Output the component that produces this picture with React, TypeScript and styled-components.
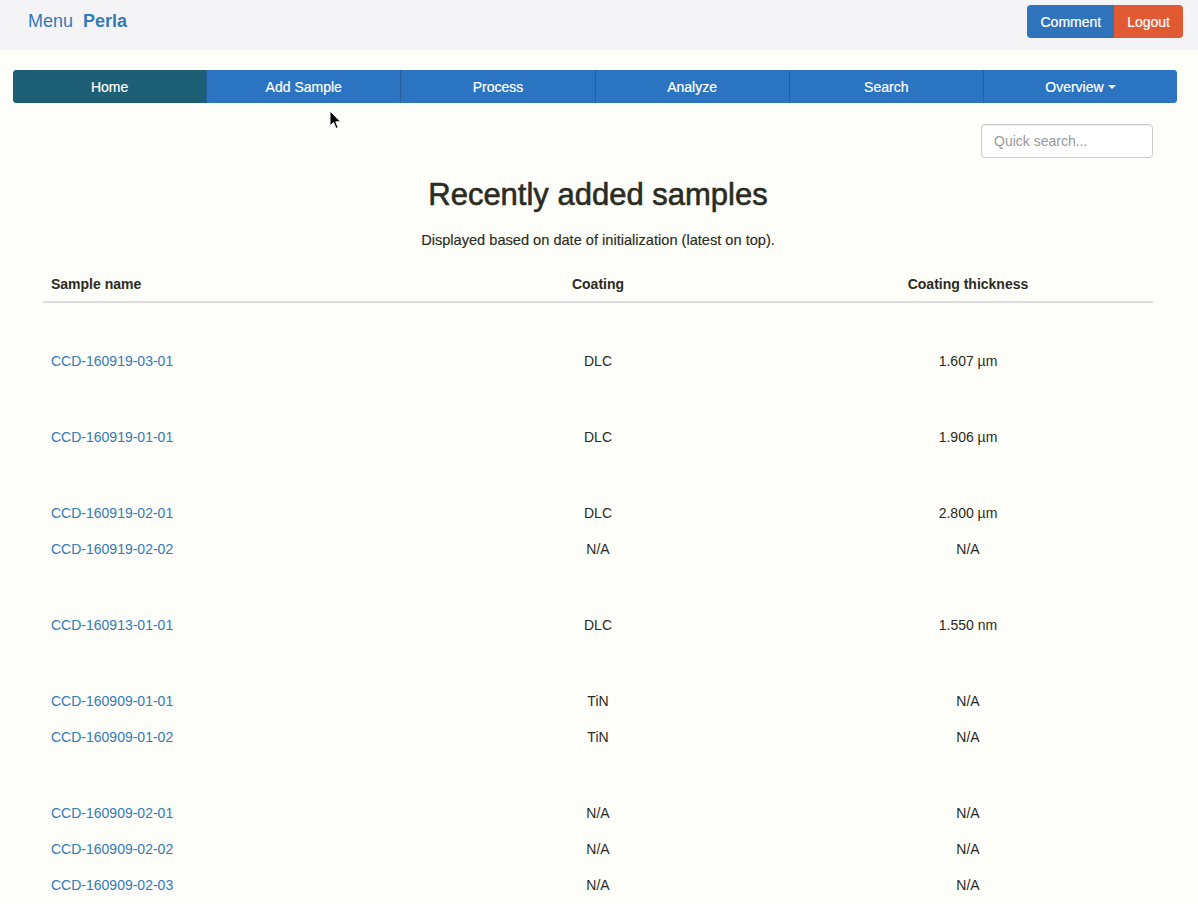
import styled, { createGlobalStyle } from "styled-components"

const GlobalStyle = createGlobalStyle`
  html, body {
    margin: 0;
    padding: 0;
    background: #fdfdf9;
    font-family: "Liberation Sans", Arial, sans-serif;
    font-size: 14px;
    color: #333;
  }
`

type Sample = { name: string; coating: string; thickness: string }

const groups: Sample[][] = [
  [{ name: "CCD-160919-03-01", coating: "DLC", thickness: "1.607 µm" }],
  [{ name: "CCD-160919-01-01", coating: "DLC", thickness: "1.906 µm" }],
  [
    { name: "CCD-160919-02-01", coating: "DLC", thickness: "2.800 µm" },
    { name: "CCD-160919-02-02", coating: "N/A", thickness: "N/A" },
  ],
  [{ name: "CCD-160913-01-01", coating: "DLC", thickness: "1.550 nm" }],
  [
    { name: "CCD-160909-01-01", coating: "TiN", thickness: "N/A" },
    { name: "CCD-160909-01-02", coating: "TiN", thickness: "N/A" },
  ],
  [
    { name: "CCD-160909-02-01", coating: "N/A", thickness: "N/A" },
    { name: "CCD-160909-02-02", coating: "N/A", thickness: "N/A" },
    { name: "CCD-160909-02-03", coating: "N/A", thickness: "N/A" },
  ],
]

const navItems = ["Home", "Add Sample", "Process", "Analyze", "Search", "Overview"]

const App = () => {
  return (
    <>
      <GlobalStyle />
      <TopBar>
        <Brand>
          <BrandLink>Menu</BrandLink>
          <BrandLink bold>Perla</BrandLink>
        </Brand>
        <ButtonGroup>
          <TopButton bg="#2f73bd">Comment</TopButton>
          <TopButton bg="#e25a33">Logout</TopButton>
        </ButtonGroup>
      </TopBar>

      <Page>
        <NavBar>
          {navItems.map((item, i) => (
            <NavItem key={item} active={i === 0}>
              {item}
              {item === "Overview" && <Caret />}
            </NavItem>
          ))}
        </NavBar>

        <Content>
          <SearchRow>
            <SearchInput placeholder="Quick search..." />
          </SearchRow>

          <Title>Recently added samples</Title>
          <Subtitle>Displayed based on date of initialization (latest on top).</Subtitle>

          <Table>
            <colgroup>
              <col style={{ width: "33.33%" }} />
              <col style={{ width: "33.33%" }} />
              <col style={{ width: "33.33%" }} />
            </colgroup>
            <thead>
              <tr>
                <Th align="left">Sample name</Th>
                <Th align="center">Coating</Th>
                <Th align="center">Coating thickness</Th>
              </tr>
            </thead>
            <tbody>
              {groups.map((group, gi) => (
                <Group key={gi} rows={group} />
              ))}
            </tbody>
          </Table>
        </Content>
      </Page>

      <Cursor width="13" height="20" viewBox="0 0 13 20">
        <path d="M1 1 L1 16 L4.5 12.5 L7 18.5 L9.2 17.6 L6.8 11.8 L11.6 11.8 Z" fill="#000" stroke="#fff" strokeWidth="1" />
      </Cursor>
    </>
  )
}

const Group = ({ rows }: { rows: Sample[] }) => (
  <>
    <tr>
      <Spacer colSpan={3} />
    </tr>
    {rows.map((s) => (
      <tr key={s.name}>
        <Td align="left">
          <SampleLink>{s.name}</SampleLink>
        </Td>
        <Td align="center">{s.coating}</Td>
        <Td align="center">{s.thickness}</Td>
      </tr>
    ))}
  </>
)

export default App

const TopBar = styled.div`
  height: 50px;
  background: #f4f4f6;
  display: flex;
  align-items: flex-start;
  justify-content: space-between;
  padding: 0 15px 0 28px;
`

const Brand = styled.div`
  display: flex;
  gap: 10px;
  padding-top: 10px;
`

const BrandLink = styled.span<{ bold?: boolean }>`
  font-size: 18px;
  line-height: 22px;
  color: #337ab7;
  font-weight: ${({ bold }) => (bold ? 700 : 400)};
`

const ButtonGroup = styled.div`
  display: flex;
  margin-top: 5px;
  border-radius: 4px;
  overflow: hidden;
`

const TopButton = styled.button<{ bg: string }>`
  height: 33px;
  padding: 0 13px;
  border: none;
  background: ${({ bg }) => bg};
  color: #fff;
  font-family: "Liberation Sans", Arial, sans-serif;
  font-size: 14px;
  -webkit-text-stroke: 0.2px #fff;
`

const Page = styled.div`
  padding: 20px 21px 0 13px;
`

const NavBar = styled.div`
  display: flex;
  height: 33px;
  border-radius: 4px;
  overflow: hidden;
  background: #2a74c2;
`

const NavItem = styled.div<{ active?: boolean }>`
  flex: 1;
  display: flex;
  align-items: center;
  justify-content: center;
  color: #fff;
  font-size: 14px;
  -webkit-text-stroke: 0.2px #fff;
  background: ${({ active }) => (active ? "#1d6075" : "#2a74c2")};
  border-left: 1px solid #245f9c;

  &:first-child {
    border-left: none;
  }
`

const Caret = styled.span`
  display: inline-block;
  margin-left: 4px;
  margin-top: 1px;
  width: 0;
  height: 0;
  border-top: 4px solid #fff;
  border-left: 4px solid transparent;
  border-right: 4px solid transparent;
`

const Content = styled.div`
  padding: 0 24px 0 30px;
`

const SearchRow = styled.div`
  display: flex;
  justify-content: flex-end;
  margin-top: 21px;
`

const SearchInput = styled.input`
  width: 172px;
  height: 34px;
  box-sizing: border-box;
  padding: 6px 12px;
  border: 1px solid #ccc;
  border-radius: 4px;
  background: #fff;
  box-shadow: inset 0 1px 1px rgba(0, 0, 0, 0.075);
  font-family: "Liberation Sans", Arial, sans-serif;
  font-size: 14px;
  color: #555;

  &::placeholder {
    color: #999;
  }
`

const Title = styled.h2`
  margin: 20px 0 0;
  text-align: center;
  font-size: 31px;
  line-height: 34px;
  font-weight: 500;
  color: #2b2b22;
  -webkit-text-stroke: 0.6px #2b2b22;
`

const Subtitle = styled.p`
  margin: 18px 0 0;
  text-align: center;
  font-size: 14.6px;
  line-height: 20px;
  color: #2b2b22;
  -webkit-text-stroke: 0.15px #2b2b22;
`

const Table = styled.table`
  width: 100%;
  margin-top: 16px;
  border-collapse: collapse;
  table-layout: fixed;
`

const Th = styled.th<{ align: string }>`
  height: 35px;
  box-sizing: border-box;
  padding: 8px 8px 7px;
  text-align: ${({ align }) => align};
  font-size: 14px;
  font-weight: 700;
  line-height: 20px;
  color: #2b2b22;
  border-bottom: 2px solid #ddd;
`

const Td = styled.td<{ align: string }>`
  padding: 8px;
  text-align: ${({ align }) => align};
  font-size: 14px;
  line-height: 20px;
  color: #2b2b22;
`

const Spacer = styled.td`
  height: 40px;
  padding: 0;
`

const SampleLink = styled.a`
  color: #337ab7;
  text-decoration: none;
`

const Cursor = styled.svg`
  position: absolute;
  left: 329px;
  top: 110px;
`
